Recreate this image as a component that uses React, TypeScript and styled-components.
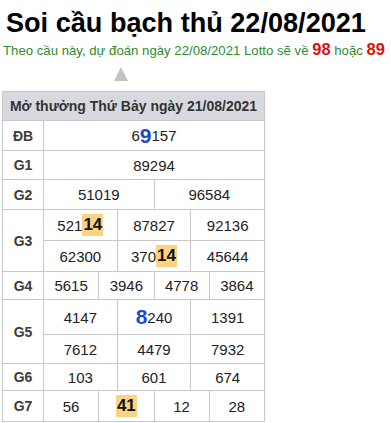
import React from 'react';
import styled, { createGlobalStyle } from 'styled-components';

const GlobalStyle = createGlobalStyle`
  body {
    margin: 0;
    background: #fff;
    font-family: 'Liberation Sans', Arial, sans-serif;
  }
`;

const Page = styled.div`
  padding: 0 0 0 2px;
`;

const Title = styled.h1`
  margin: 0;
  padding: 6px 0 0 4px;
  font-size: 27.1px;
  line-height: 34px;
  font-weight: bold;
  color: #000;
  white-space: nowrap;
`;

const Lead = styled.p`
  margin: 0;
  padding-left: 1px;
  font-size: 13.2px;
  line-height: 18px;
  color: #2f8a2f;
  white-space: nowrap;
`;

const Red = styled.b`
  color: #e01010;
  font-size: 16.5px;
`;

const Arrow = styled.div`
  width: 0;
  height: 0;
  margin: 7px 0 10px 112px;
  border-left: 7px solid transparent;
  border-right: 7px solid transparent;
  border-bottom: 14px solid #c3c3c3;
`;

const Board = styled.div`
  width: 261px;
  display: grid;
  grid-template-columns: 40px repeat(12, 1fr);
  grid-template-rows: 28px 29px 28px 29px 30px 30px 27px 34px 28px 26px 30px;
  gap: 1px;
  padding: 1px;
  background: #c9c9c9;
  box-shadow: 0 2px 1px #e4e4e4;
`;

const Head = styled.div`
  grid-column: 1 / -1;
  background: #d7d9df;
  display: flex;
  align-items: center;
  justify-content: center;
  font-size: 14px;
  font-weight: bold;
  color: #333;
`;

const Label = styled.div<{ $rows?: number }>`
  grid-column: 1;
  grid-row: span ${p => p.$rows || 1};
  background: #fff;
  display: flex;
  align-items: center;
  justify-content: center;
  font-size: 14px;
  font-weight: bold;
  color: #3c3c3c;
`;

const Cell = styled.div<{ $span: number }>`
  grid-column: span ${p => p.$span};
  background: #fff;
  display: flex;
  align-items: center;
  justify-content: center;
  font-size: 15px;
  color: #222;
`;

const Big = styled.b`
  color: #1d47d3;
  font-size: 21px;
`;

const Hit = styled.b`
  background: #fdd283;
  color: #111;
  font-size: 17px;
  padding: 2px 1px;
  line-height: 18px;
`;

type Row = { label: string; rows?: number; lines: React.ReactNode[][] };

const rows: Row[] = [
  { label: 'ĐB', lines: [[<><span>6</span><Big>9</Big><span>157</span></>]] },
  { label: 'G1', lines: [['89294']] },
  { label: 'G2', lines: [['51019', '96584']] },
  {
    label: 'G3',
    rows: 2,
    lines: [
      [<>521<Hit>14</Hit></>, '87827', '92136'],
      ['62300', <>370<Hit>14</Hit></>, '45644'],
    ],
  },
  { label: 'G4', lines: [['5615', '3946', '4778', '3864']] },
  {
    label: 'G5',
    rows: 2,
    lines: [
      ['4147', <><Big>8</Big>240</>, '1391'],
      ['7612', '4479', '7932'],
    ],
  },
  { label: 'G6', lines: [['103', '601', '674']] },
  { label: 'G7', lines: [['56', <Hit>41</Hit>, '12', '28']] },
];

export default function App() {
  return (
    <>
      <GlobalStyle />
      <Page>
        <Title>Soi cầu bạch thủ 22/08/2021</Title>
        <Lead>
          Theo cầu này, dự đoán ngày 22/08/2021 Lotto sẽ về <Red>98</Red> hoặc <Red>89</Red>
        </Lead>
        <Arrow />
        <Board>
          <Head>Mở thưởng Thứ Bảy ngày 21/08/2021</Head>
          {rows.map(r => (
            <React.Fragment key={r.label}>
              <Label $rows={r.rows}>{r.label}</Label>
              {r.lines.map((line, i) =>
                line.map((v, j) => (
                  <Cell key={`${i}-${j}`} $span={12 / line.length}>
                    {v}
                  </Cell>
                ))
              )}
            </React.Fragment>
          ))}
        </Board>
      </Page>
    </>
  );
}
